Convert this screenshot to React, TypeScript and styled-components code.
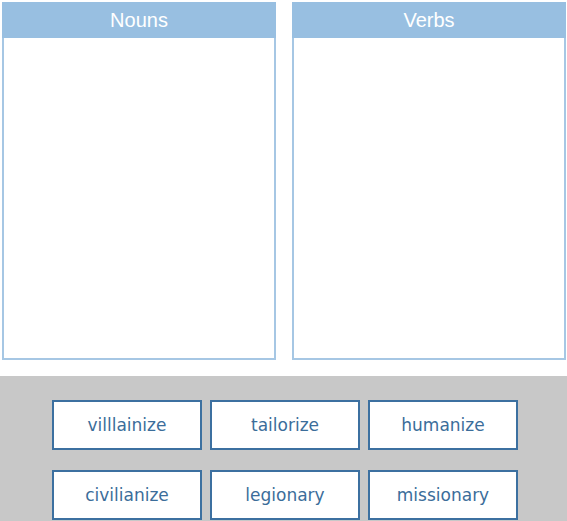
import React from "react";
import styled, { createGlobalStyle } from "styled-components";

const Global = createGlobalStyle`
  html, body { margin: 0; padding: 0; background: #ffffff; }
  body { width: 567px; height: 521px; overflow: hidden; }
`;

const Page = styled.div`
  display: flex;
  flex-direction: column;
  gap: 16px;
  padding-top: 2px;
`;

const Columns = styled.div`
  display: flex;
  gap: 16px;
  padding: 0 1px 0 2px;
`;

const Bin = styled.div`
  flex: 1;
  height: 358px;
  display: flex;
  flex-direction: column;
  border: 2px solid #a6c7e4;
  border-top: none;
  box-sizing: border-box;
  background: #ffffff;
`;

const BinHeader = styled.div`
  height: 36px;
  margin: 0 -2px;
  background: #98bfe1;
  color: #ffffff;
  font-family: "Liberation Sans", Arial, sans-serif;
  font-size: 20px;
  display: flex;
  align-items: center;
  justify-content: center;
`;

const Tray = styled.div`
  background: #c8c8c8;
  height: 145px;
  box-sizing: border-box;
  padding: 24px 0 0 3px;
  display: grid;
  grid-template-columns: repeat(3, 150px);
  grid-auto-rows: 50px;
  column-gap: 8px;
  row-gap: 20px;
  justify-content: center;
  align-content: start;
`;

const Tile = styled.div`
  box-sizing: border-box;
  border: 2px solid #3c70a0;
  background: #ffffff;
  color: #3b6d9a;
  font-family: "DejaVu Sans", Verdana, sans-serif;
  font-size: 17px;
  display: flex;
  align-items: center;
  justify-content: center;
`;

const words = ["villlainize", "tailorize", "humanize", "civilianize", "legionary", "missionary"];

export default function App() {
  return (
    <>
      <Global />
      <Page>
        <Columns>
          <Bin>
            <BinHeader>Nouns</BinHeader>
          </Bin>
          <Bin>
            <BinHeader>Verbs</BinHeader>
          </Bin>
        </Columns>
        <Tray>
          {words.map((w) => (
            <Tile key={w}>{w}</Tile>
          ))}
        </Tray>
      </Page>
    </>
  );
}
